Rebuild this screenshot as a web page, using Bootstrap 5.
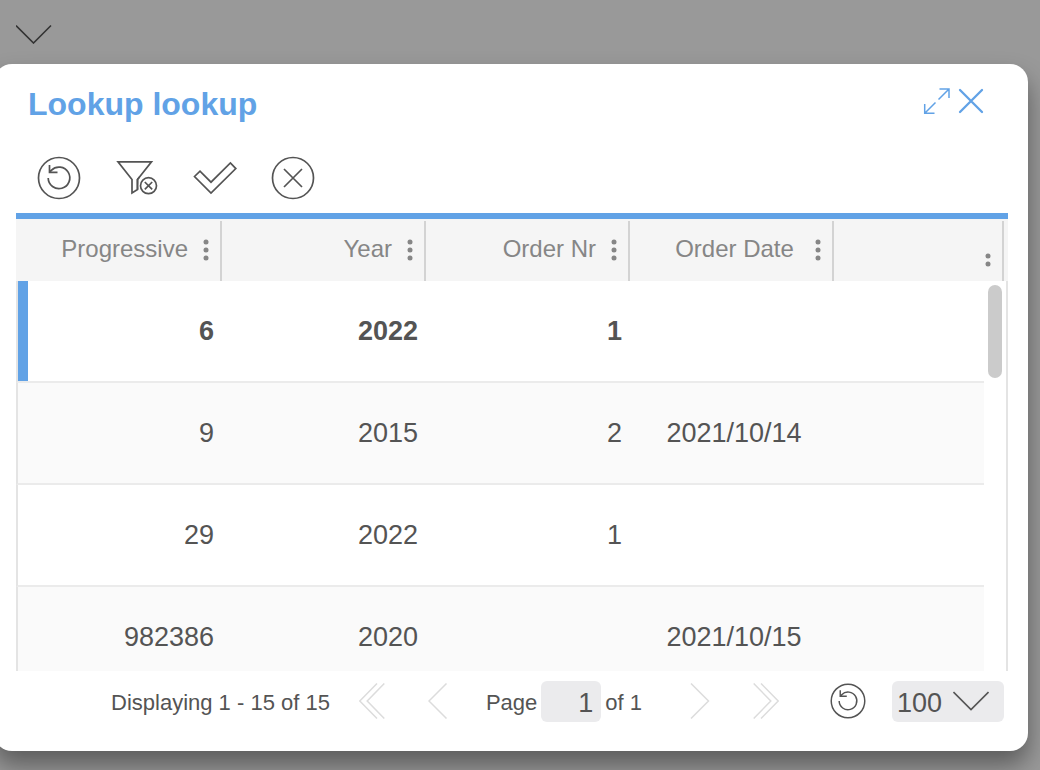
<!DOCTYPE html>
<html lang="en">
<head>
<meta charset="utf-8">
<meta name="viewport" content="width=device-width, initial-scale=1">
<title>Lookup lookup</title>
<link rel="stylesheet" href="https://cdn.jsdelivr.net/npm/bootstrap@5.3.0/dist/css/bootstrap.min.css">
<style>
  :root { --accent: #61a2e6; --ink: #545454; --muted: #868686; --field: #ebebed; }
  body { background: #999; color: var(--ink); font-family: "Liberation Sans", Arial, sans-serif; }
  svg { display: block; fill: none; stroke: currentColor; flex: none; }
  .plain { background: none; border: 0; padding: 0; color: inherit; }

  .page-strip { height: 64px; padding: 8px 16px 0; color: #333; }
  .lookup {
    margin: 0 12px 19px -6px; padding: 0 20px 0 22px; min-height: 0;
    background: #fff; border-radius: 18px; box-shadow: 0 14px 24px rgba(0, 0, 0, .4);
  }
  .lookup-head { height: 80px; padding: 0 24px 0 12px; color: var(--accent); }
  .lookup-title { font-size: 32px; line-height: 36px; font-weight: 700; }
  .lookup-actions { gap: 8px; padding-bottom: 6px; }
  .tools { height: 69px; padding: 0 0 1px 4px; }
  .tool { width: 78px; height: 48px; }

  .grid-box { border-top: 6px solid var(--accent); min-height: 0; }
  .grid { width: 100%; table-layout: fixed; border-collapse: separate; border-spacing: 0; }
  .col-data { width: 204px; }
  .col-first { width: 206px; }
  .col-bar { width: 24px; }
  .grid th { height: 62px; padding: 2px 0 0; background: #f5f5f5; font-size: 24px; font-weight: 400; color: var(--muted); }
  .head-cell { height: 60px; padding: 0 11px 4px 0; gap: 15px; border-right: 2px solid #d3d3d3; line-height: 28px; }
  .head-cell.centered { padding-left: 24px; gap: 0; }
  .head-cell.trailing { margin-right: 4px; padding: 16px 11px 0 0; }
  .kebab { fill: currentColor; stroke: none; }
  .grid td {
    height: 102px; padding: 0 8px; vertical-align: middle; text-align: right;
    font-size: 27px; line-height: 32px; border-bottom: 2px solid #ebebeb;
  }
  .grid td:first-child { border-left: 2px solid #e4e4e4; }
  .grid td:last-child { background: #fff; border-bottom: 0; border-right: 2px solid #e4e4e4; }
  .grid td.date { text-align: center; padding: 0 0 0 4px; }
  .grid tbody tr:nth-child(even) td:not(:last-child) { background: #fafafa; }
  .grid tr.selected td { font-weight: 700; }
  .grid tr.selected td:first-child { box-shadow: inset 10px 0 var(--accent); }
  .thumb { top: 66px; right: 6px; width: 14px; height: 93px; border-radius: 7px; background: #cbcbcb; }

  .pager { height: 80px; padding: 0 4px 20px 0; font-size: 22px; line-height: 28px; white-space: nowrap; }
  .pager-btn { width: 66px; height: 40px; }
  .pager-btn:disabled { color: #dcdcdc; }
  .pager-status, .page-label, .page-total { padding-top: 4px; }
  .pager-status { margin-right: 9px; }
  .page-label { margin-left: 15px; }
  .page-field { width: 60px; margin: 0 4px; text-align: right; padding: 4px 8px 0; }
  .page-total { margin-right: 25px; }
  .field { height: 41px; border: 0; border-radius: 6px; background: var(--field); color: var(--ink); font-size: 27px; line-height: 32px; }
  .reload { margin: 0 11px 0 16px; }
  .size-box { width: 112px; }
  .size-box select { appearance: none; padding: 4px 52px 0 5px; }
  .size-box svg { top: 10px; right: 15px; pointer-events: none; }
</style>
</head>
<body>
<div class="d-flex flex-column vh-100 overflow-hidden">
  <div class="page-strip flex-shrink-0">
    <button class="plain" type="button" aria-label="Expand list">
      <svg width="36" height="36" viewBox="0 0 36 36" stroke-width="1.6"><path d="M0 17.500L17.500 35L35 17.500"/></svg>
    </button>
  </div>

  <section class="lookup d-flex flex-column flex-fill" role="dialog" aria-labelledby="lookupTitle">
    <header class="lookup-head d-flex align-items-center justify-content-between flex-shrink-0">
      <h1 class="lookup-title m-0" id="lookupTitle">Lookup lookup</h1>
      <div class="lookup-actions d-flex align-items-center">
        <button class="plain" type="button" aria-label="Maximize">
          <svg width="27" height="26" viewBox="0 0 27 26" stroke-width="1.5"><path d="M15.500 11.500L26 1M16.500 1H26V10M12.500 14.500L2 25M1.700 16V25.200H11.500"/></svg>
        </button>
        <button class="plain" type="button" aria-label="Close">
          <svg width="26" height="26" viewBox="0 0 26 26" stroke-width="2.300" stroke-linecap="round"><path d="M2 2L24 24M24 2L2 24"/></svg>
        </button>
      </div>
    </header>

    <div class="tools d-flex align-items-center flex-shrink-0" role="toolbar" aria-label="Lookup tools">
      <button class="plain tool d-flex align-items-center justify-content-center" type="button" aria-label="Reload">
        <svg width="44" height="44" viewBox="0 0 44 44" stroke-width="1.7"><circle cx="22" cy="22" r="20.500"/><path d="M11.200 22A10.800 10.800 0 1 0 14.300 14.300L12.800 16M12.500 9V16.300H20.500"/></svg>
      </button>
      <button class="plain tool d-flex align-items-center justify-content-center" type="button" aria-label="Clear filter">
        <svg width="44" height="44" viewBox="0 0 44 44" stroke-width="1.7"><path d="M22.500 33.500L17 37V23.500L3 5.800H36.500L22.500 23.500Z"/><circle cx="33.500" cy="29.700" r="10" fill="#fff" stroke="none"/><path d="M24.500 21L22.500 23.500V33.500"/><circle cx="33.500" cy="29.700" r="8"/><path d="M29.800 26L37.200 33.400M37.200 26L29.800 33.400"/></svg>
      </button>
      <button class="plain tool d-flex align-items-center justify-content-center" type="button" aria-label="Confirm">
        <svg width="44" height="44" viewBox="0 0 44 44" stroke-width="1.7"><path d="M1.500 20.500L7 15.200L18 26.200L37.400 7L42.800 12.600L18 37Z"/></svg>
      </button>
      <button class="plain tool d-flex align-items-center justify-content-center" type="button" aria-label="Cancel">
        <svg width="44" height="44" viewBox="0 0 44 44" stroke-width="1.7"><circle cx="22" cy="22" r="20.500"/><path d="M13 13L31 31M31 13L13 31"/></svg>
      </button>
    </div>

    <div class="grid-box flex-fill position-relative overflow-hidden">
      <table class="grid">
        <colgroup><col class="col-first"><col class="col-data"><col class="col-data"><col class="col-data"><col><col class="col-bar"></colgroup>
        <thead>
          <tr>
            <th scope="col"><div class="head-cell d-flex align-items-center justify-content-end">Progressive
              <button class="plain" type="button" aria-label="Progressive menu"><svg class="kebab" width="6" height="24" viewBox="0 0 6 24"><circle cx="3" cy="5" r="2.500"/><circle cx="3" cy="13" r="2.500"/><circle cx="3" cy="21" r="2.500"/></svg></button></div></th>
            <th scope="col"><div class="head-cell d-flex align-items-center justify-content-end">Year
              <button class="plain" type="button" aria-label="Year menu"><svg class="kebab" width="6" height="24" viewBox="0 0 6 24"><circle cx="3" cy="5" r="2.500"/><circle cx="3" cy="13" r="2.500"/><circle cx="3" cy="21" r="2.500"/></svg></button></div></th>
            <th scope="col"><div class="head-cell d-flex align-items-center justify-content-end">Order Nr
              <button class="plain" type="button" aria-label="Order Nr menu"><svg class="kebab" width="6" height="24" viewBox="0 0 6 24"><circle cx="3" cy="5" r="2.500"/><circle cx="3" cy="13" r="2.500"/><circle cx="3" cy="21" r="2.500"/></svg></button></div></th>
            <th scope="col"><div class="head-cell centered d-flex align-items-center"><span class="flex-fill text-center">Order Date</span>
              <button class="plain" type="button" aria-label="Order Date menu"><svg class="kebab" width="6" height="24" viewBox="0 0 6 24"><circle cx="3" cy="5" r="2.500"/><circle cx="3" cy="13" r="2.500"/><circle cx="3" cy="21" r="2.500"/></svg></button></div></th>
            <th scope="col" colspan="2"><div class="head-cell trailing d-flex align-items-center justify-content-end">
              <button class="plain" type="button" aria-label="Column menu"><svg class="kebab" width="6" height="16" viewBox="0 0 6 16"><circle cx="3" cy="5" r="2.500"/><circle cx="3" cy="13" r="2.500"/></svg></button></div></th>
          </tr>
        </thead>
        <tbody>
          <tr class="selected"><td>6</td><td>2022</td><td>1</td><td class="date"></td><td></td><td></td></tr>
          <tr><td>9</td><td>2015</td><td>2</td><td class="date">2021/10/14</td><td></td><td></td></tr>
          <tr><td>29</td><td>2022</td><td>1</td><td class="date"></td><td></td><td></td></tr>
          <tr><td>982386</td><td>2020</td><td></td><td class="date">2021/10/15</td><td></td><td></td></tr>
        </tbody>
      </table>
      <div class="thumb position-absolute"></div>
    </div>

    <footer class="pager d-flex align-items-center justify-content-end flex-shrink-0">
      <span class="pager-status">Displaying 1 - 15 of 15</span>
      <button class="plain pager-btn d-flex align-items-center justify-content-center" type="button" disabled aria-label="First page">
        <svg width="26" height="36" viewBox="0 0 26 36" stroke-width="1.5"><path d="M18 .500L.800 18L18 35.500M25.300 .500L8.200 18L25.300 35.500"/></svg>
      </button>
      <button class="plain pager-btn d-flex align-items-center justify-content-center" type="button" disabled aria-label="Previous page">
        <svg width="20" height="36" viewBox="0 0 20 36" stroke-width="1.5"><path d="M18.500 .500L1 18L18.500 35.500"/></svg>
      </button>
      <label class="page-label" for="pageNo">Page</label>
      <input class="field page-field" id="pageNo" type="text" value="1">
      <span class="page-total">of 1</span>
      <button class="plain pager-btn d-flex align-items-center justify-content-center" type="button" disabled aria-label="Next page">
        <svg width="20" height="36" viewBox="0 0 20 36" stroke-width="1.5"><path d="M1 .500L18.500 18L1 35.500"/></svg>
      </button>
      <button class="plain pager-btn d-flex align-items-center justify-content-center" type="button" disabled aria-label="Last page">
        <svg width="26" height="36" viewBox="0 0 26 36" stroke-width="1.5"><path d="M.700 .500L17.800 18L.700 35.500M8 .500L25.200 18L8 35.500"/></svg>
      </button>
      <button class="plain pager-btn reload d-flex align-items-center justify-content-center" type="button" aria-label="Reload page">
        <svg width="36" height="36" viewBox="0 0 44 44" stroke-width="1.8"><circle cx="22" cy="22" r="20.500"/><path d="M11.200 22A10.800 10.800 0 1 0 14.300 14.300L12.800 16M12.500 9V16.300H20.500"/></svg>
      </button>
      <div class="size-box position-relative">
        <select class="field w-100" aria-label="Rows per page"><option>100</option><option>200</option></select>
        <svg class="position-absolute" width="36" height="20" viewBox="0 0 36 20" stroke-width="1.6"><path d="M.500 1L18 18.500L35.500 1"/></svg>
      </div>
    </footer>
  </section>
</div>
<script src="https://cdn.jsdelivr.net/npm/bootstrap@5.3.0/dist/js/bootstrap.bundle.min.js"></script>
</body>
</html>
